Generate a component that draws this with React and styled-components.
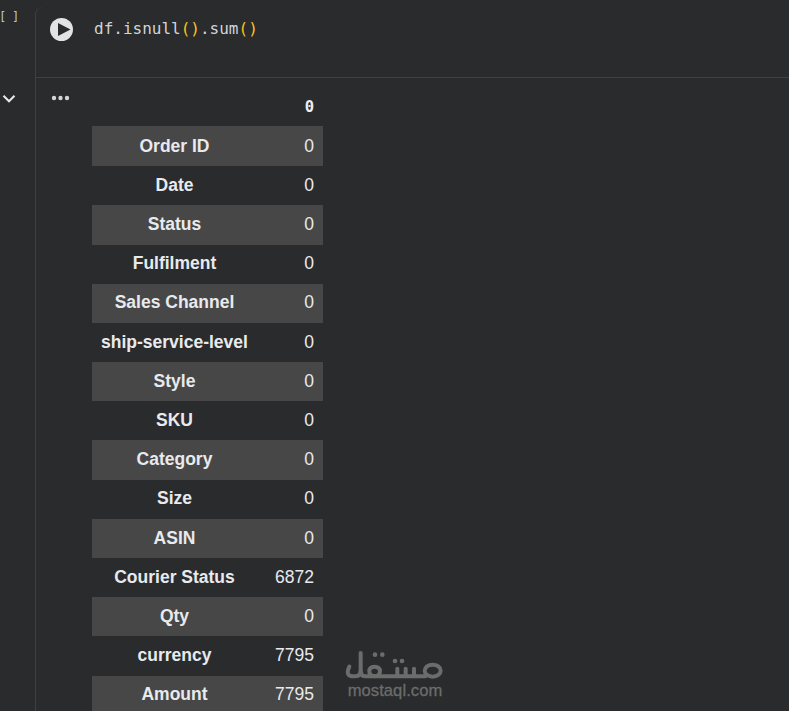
import React from "react";
import styled, { createGlobalStyle } from "styled-components";

const Global = createGlobalStyle`
  html, body { margin: 0; padding: 0; background: #2a2b2d; overflow: hidden; }
  #root { width: 789px; height: 711px; overflow: hidden; }
`;

const Page = styled.div`
  position: relative;
  width: 789px;
  height: 711px;
  display: flex;
  background: #2a2b2d;
  overflow: hidden;
`;

const Gutter = styled.div`
  width: 35px;
  flex: none;
  position: relative;
`;

const Brackets = styled.div`
  font: 12px/1 "DejaVu Sans Mono", monospace;
  color: #b4c6d4;
  margin: 11px 0 0 -1px;
  letter-spacing: -0.7px;
  white-space: pre;
`;

const Collapse = styled.svg`
  position: absolute;
  left: 2px;
  top: 94px;
`;

const Cell = styled.div`
  flex: 1;
  border-left: 1px solid #3f4043;
  border-top-left-radius: 8px;
  margin-top: 7px;
  min-width: 0;
`;

const CodeRow = styled.div`
  height: 70px;
  display: flex;
  border-bottom: 1px solid #3f4043;
`;

const RunButton = styled.svg`
  margin: 11px 0 0 14px;
  flex: none;
`;

const Code = styled.div`
  font: 16px/20px "DejaVu Sans Mono", monospace;
  color: #d0d4d8;
  margin: 12px 0 0 20px;
`;

const Paren = styled.span`
  color: #f9c21c;
`;

const Output = styled.div`
  display: flex;
`;

const OutputGutter = styled.div`
  width: 56px;
  flex: none;
  padding: 9px 0 0 15px;
  box-sizing: border-box;
`;

const Table = styled.table`
  border-collapse: collapse;
  border: none;
  width: 231px;
  table-layout: fixed;
  margin-top: 9px;
  font: 17.5px "Liberation Sans", Arial, sans-serif;
  color: #e8eaed;
`;

const HeadName = styled.th`
  box-sizing: border-box;
  width: 165px;
  height: 39px;
  padding: 0;
`;

const HeadCell = styled.th`
  box-sizing: border-box;
  height: 39px;
  padding: 0 9px 0 0;
  text-align: right;
  font: bold 15.5px "DejaVu Sans Mono", monospace;
  color: #eef0f2;
`;

const Row = styled.tr`
  height: ${(p) => p.$h}px;
  background: ${(p) => (p.$odd ? "#474747" : "transparent")};
`;

const Name = styled.th`
  padding: ${(p) => (p.$nudge > 0 ? "1px" : "0")} 0 ${(p) => (p.$nudge < 0 ? "3px" : p.$nudge > 0 ? "0" : "1px")};
  text-align: center;
  font-weight: bold;
  white-space: nowrap;
`;

const Value = styled.td`
  padding: ${(p) => (p.$nudge > 0 ? "1px" : "0")} 9px ${(p) => (p.$nudge < 0 ? "3px" : p.$nudge > 0 ? "0" : "1px")} 0;
  text-align: right;
`;

const Watermark = styled.div`
  position: absolute;
  left: 340px;
  top: 648px;
  width: 110px;
  display: flex;
  flex-direction: column;
  align-items: center;
  color: #6c6c6c;
`;

const LogoMark = styled.svg`
  display: block;
  margin-bottom: -2px;
`;

const WatermarkLatin = styled.div`
  font: 16.6px/16px "Liberation Sans", Arial, sans-serif;
  letter-spacing: 0.05px;
  -webkit-text-stroke: 0.3px #6c6c6c;
`;

const rows = [
  ["Order ID", 0, 40, 1], ["Date", 0, 39, 0], ["Status", 0, 40, 0], ["Fulfilment", 0, 39, -1], ["Sales Channel", 0, 39, -1],
  ["ship-service-level", 0, 39, 0], ["Style", 0, 39, 0], ["SKU", 0, 39, 0], ["Category", 0, 40, 0], ["Size", 0, 39, -1],
  ["ASIN", 0, 39, 0], ["Courier Status", 6872, 39, 0], ["Qty", 0, 39, 0], ["currency", 7795, 40, 0], ["Amount", 7795, 39, -1],
];

export default function App() {
  return (
    <Page>
      <Global />
      <Gutter>
        <Brackets>{"[ ]"}</Brackets>
        <Collapse width="14" height="10" viewBox="0 0 14 10" fill="none">
          <path d="M1.5 1.8 L7 7.3 L12.5 1.8" stroke="#e8eaed" strokeWidth="2" />
        </Collapse>
      </Gutter>
      <Cell>
        <CodeRow>
          <RunButton width="24" height="24" viewBox="0 0 24 24">
            <circle cx="11.5" cy="11.5" r="11.5" fill="#e3e3e3" />
            <path d="M8 5 L20.5 11.5 L8 18 Z" fill="#2a2b2d" />
          </RunButton>
          <Code>
            df.isnull<Paren>()</Paren>.sum<Paren>()</Paren>
          </Code>
        </CodeRow>
        <Output>
          <OutputGutter>
            <svg width="20" height="6" viewBox="0 0 20 6">
              <circle cx="3" cy="3" r="2.2" fill="#d5d5d5" />
              <circle cx="9.5" cy="3" r="2.2" fill="#d5d5d5" />
              <circle cx="16" cy="3" r="2.2" fill="#d5d5d5" />
            </svg>
          </OutputGutter>
          <Table>
            <thead>
              <tr>
                <HeadName />
                <HeadCell>0</HeadCell>
              </tr>
            </thead>
            <tbody>
              {rows.map(([n, v, h, nudge], i) => (
                <Row key={n} $odd={i % 2 === 0} $h={h}>
                  <Name $nudge={nudge}>{n}</Name>
                  <Value $nudge={nudge}>{v}</Value>
                </Row>
              ))}
            </tbody>
          </Table>
        </Output>
      </Cell>
      <Watermark>
        <LogoMark width="110" height="37" viewBox="0 0 330 111" fill="none" stroke="#6c6c6c" strokeWidth="12" strokeLinecap="round" strokeLinejoin="round">
          <path d="M28 56 Q14 86 42 85 Q62 85 62 68 V15" />
          <path d="M62 68 Q62 85 78 85 H256" />
          <path d="M104 85 Q88 85 88 70 Q88 56 103 56 Q120 56 120 70 Q120 85 104 85" />
          <path d="M172 62 V85 M197 62 V85 M222 62 V85" />
          <ellipse cx="278" cy="68" rx="24" ry="18" />
          <g fill="#6c6c6c" stroke="none">
            <circle cx="105" cy="20" r="7" />
            <circle cx="127" cy="20" r="7" />
            <circle cx="165" cy="39" r="7" />
            <circle cx="186" cy="39" r="7" />
          </g>
        </LogoMark>
        <WatermarkLatin>mostaql.com</WatermarkLatin>
      </Watermark>
    </Page>
  );
}
